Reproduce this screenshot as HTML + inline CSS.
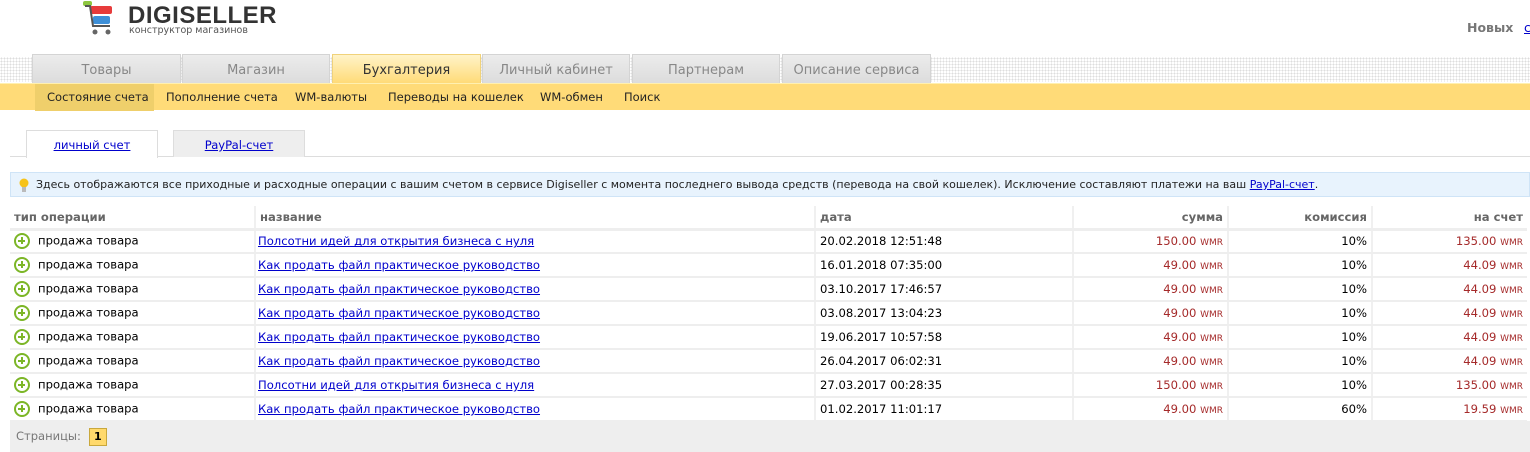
<!DOCTYPE html>
<html><head><meta charset="utf-8"><style>
*{margin:0;padding:0;box-sizing:border-box}
body{width:1530px;height:452px;overflow:hidden;background:#fff;font-family:"DejaVu Sans","Liberation Sans",sans-serif;font-size:11.6px;color:#000;position:relative}
.abs{position:absolute}
a{color:#00c;text-decoration:underline}
.dots{left:0;top:57px;width:1530px;height:25px;background-image:radial-gradient(#ddd 0.8px,transparent 1px);background-size:3px 3px}
.tab{top:54px;height:29px;background:linear-gradient(#ececec,#dcdcdc);border:1px solid #d4d4d4;border-bottom:none;color:#888;font-size:13px;text-align:center;line-height:31px}
.tab.act{background:linear-gradient(#fff3c8,#ffdb78);color:#333;border-color:#f0d27a}
.sub{left:0;top:83px;width:1530px;height:27px;background:#ffdb78;border-top:1px solid #fff0b0}
.sub span{position:absolute;top:0;line-height:27px;font-size:11.5px;color:#222}
.st{top:130px;height:27px;border:1px solid #ddd;border-bottom:none;text-align:center;line-height:28px;font-size:11.6px}
.info{left:10px;top:172px;width:1520px;height:25px;background:#e8f3fd;border:1px solid #cfe4f7;line-height:24px;padding-left:25px;font-size:11px;color:#222}
table{position:absolute;left:10px;top:206px;border-collapse:collapse;width:1517px}
th{height:23px;font-weight:bold;color:#666;text-align:left;padding:0 4px;border-left:2px solid #f0f0f0;border-bottom:3px solid #eee;font-size:11.6px}
td{height:24px;padding:0 4px;border-bottom:2px solid #eee;border-left:2px solid #f0f0f0;white-space:nowrap}
td:nth-child(2){padding-left:2px}
th:first-child,td:first-child{border-left:none}
.r{text-align:right}
.m{color:#a52a2a}
.w{font-size:9px;color:#a52a2a}
.pl{display:inline-block;width:16px;height:16px;border:2.5px solid #7cb627;border-radius:50%;vertical-align:middle;position:relative;margin:0 8px 0 0}
.pl:before{content:"";position:absolute;left:2px;top:4.5px;width:7px;height:2px;background:#7cb627}
.pl:after{content:"";position:absolute;left:4.5px;top:2px;width:2px;height:7px;background:#7cb627}
.pager{left:10px;top:421px;width:1520px;height:31px;background:#eee;color:#777;font-size:11.5px;line-height:30px;padding-left:6px}
.pg{display:inline-block;width:18px;height:18px;background:#ffd96c;border:1px solid #c9a83c;color:#000;font-weight:bold;text-align:center;line-height:16px;font-size:11px;vertical-align:middle;margin-left:8px}
</style></head><body>
<svg class="abs" style="left:80px;top:0" width="40" height="36" viewBox="0 0 40 36">
<rect x="3" y="1" width="9" height="5" rx="2" fill="#8dc63f"/>
<rect x="10" y="6" width="22" height="8" rx="2" fill="#e73b3b"/>
<rect x="13" y="16" width="17" height="8" rx="2" fill="#3d8fd8"/>
<path d="M5 6 L10 6 L13 26 L30 26" stroke="#555" stroke-width="2" fill="none"/>
<circle cx="15" cy="32" r="2.5" fill="#666"/><circle cx="28" cy="32" r="2.5" fill="#666"/>
</svg>
<div class="abs" style="left:128px;top:2px;font-family:'Liberation Sans',sans-serif;font-weight:bold;font-size:24px;color:#333;letter-spacing:0.5px">DIGISELLER</div>
<div class="abs" style="left:129px;top:25px;font-size:9.5px;color:#555">конструктор магазинов</div>
<div class="abs" style="left:1467px;top:20px;font-weight:bold;color:#777;font-size:12.5px">Новых</div>
<div class="abs" style="left:1524px;top:20px;color:#00c;text-decoration:underline;font-size:12.5px">с</div>
<div class="abs dots"></div>
<div class="abs tab" style="left:32px;width:149px">Товары</div>
<div class="abs tab" style="left:182px;width:148px">Магазин</div>
<div class="abs tab act" style="left:332px;width:149px">Бухгалтерия</div>
<div class="abs tab" style="left:482px;width:148px">Личный кабинет</div>
<div class="abs tab" style="left:632px;width:148px">Партнерам</div>
<div class="abs tab" style="left:782px;width:149px">Описание сервиса</div>
<div class="abs sub">
<span style="left:35px;width:119px;background:#efcf6b;padding-left:12px">Состояние счета</span>
<span style="left:166px">Пополнение счета</span>
<span style="left:295px">WM-валюты</span>
<span style="left:388px">Переводы на кошелек</span>
<span style="left:540px">WM-обмен</span>
<span style="left:624px">Поиск</span>
</div>
<div class="abs" style="left:10px;top:156px;width:1520px;height:1px;background:#ddd"></div>
<div class="abs st" style="left:26px;width:132px;background:#fff;height:28px"><a href="#">личный счет</a></div>
<div class="abs st" style="left:173px;width:132px;background:#eee"><a href="#">PayPal-счет</a></div>
<div class="abs info"><svg class="abs" style="left:8px;top:5px" width="10" height="15" viewBox="0 0 10 15"><circle cx="5" cy="5" r="4.5" fill="#f7c31a"/><rect x="3" y="9" width="4" height="5" fill="#bbb"/></svg>Здесь отображаются все приходные и расходные операции с вашим счетом в сервисе Digiseller с момента последнего вывода средств (перевода на свой кошелек). Исключение составляют платежи на ваш <a href="#">PayPal-счет</a>.</div>
<table>
<tr><th style="width:245px">тип операции</th><th style="width:560px">название</th><th style="width:258px">дата</th><th class="r" style="width:155px">сумма</th><th class="r" style="width:144px">комиссия</th><th class="r">на счет</th></tr>
<tr><td><span class="pl"></span>продажа товара</td><td><a href="#">Полсотни идей для открытия бизнеса с нуля</a></td><td>20.02.2018 12:51:48</td><td class="r"><span class="m">150.00</span> <span class="w">WMR</span></td><td class="r">10%</td><td class="r"><span class="m">135.00</span> <span class="w">WMR</span></td></tr>
<tr><td><span class="pl"></span>продажа товара</td><td><a href="#">Как продать файл практическое руководство</a></td><td>16.01.2018 07:35:00</td><td class="r"><span class="m">49.00</span> <span class="w">WMR</span></td><td class="r">10%</td><td class="r"><span class="m">44.09</span> <span class="w">WMR</span></td></tr>
<tr><td><span class="pl"></span>продажа товара</td><td><a href="#">Как продать файл практическое руководство</a></td><td>03.10.2017 17:46:57</td><td class="r"><span class="m">49.00</span> <span class="w">WMR</span></td><td class="r">10%</td><td class="r"><span class="m">44.09</span> <span class="w">WMR</span></td></tr>
<tr><td><span class="pl"></span>продажа товара</td><td><a href="#">Как продать файл практическое руководство</a></td><td>03.08.2017 13:04:23</td><td class="r"><span class="m">49.00</span> <span class="w">WMR</span></td><td class="r">10%</td><td class="r"><span class="m">44.09</span> <span class="w">WMR</span></td></tr>
<tr><td><span class="pl"></span>продажа товара</td><td><a href="#">Как продать файл практическое руководство</a></td><td>19.06.2017 10:57:58</td><td class="r"><span class="m">49.00</span> <span class="w">WMR</span></td><td class="r">10%</td><td class="r"><span class="m">44.09</span> <span class="w">WMR</span></td></tr>
<tr><td><span class="pl"></span>продажа товара</td><td><a href="#">Как продать файл практическое руководство</a></td><td>26.04.2017 06:02:31</td><td class="r"><span class="m">49.00</span> <span class="w">WMR</span></td><td class="r">10%</td><td class="r"><span class="m">44.09</span> <span class="w">WMR</span></td></tr>
<tr><td><span class="pl"></span>продажа товара</td><td><a href="#">Полсотни идей для открытия бизнеса с нуля</a></td><td>27.03.2017 00:28:35</td><td class="r"><span class="m">150.00</span> <span class="w">WMR</span></td><td class="r">10%</td><td class="r"><span class="m">135.00</span> <span class="w">WMR</span></td></tr>
<tr><td><span class="pl"></span>продажа товара</td><td><a href="#">Как продать файл практическое руководство</a></td><td>01.02.2017 11:01:17</td><td class="r"><span class="m">49.00</span> <span class="w">WMR</span></td><td class="r">60%</td><td class="r"><span class="m">19.59</span> <span class="w">WMR</span></td></tr>
</table>
<div class="abs pager">Страницы:<span class="pg">1</span></div>
</body></html>
